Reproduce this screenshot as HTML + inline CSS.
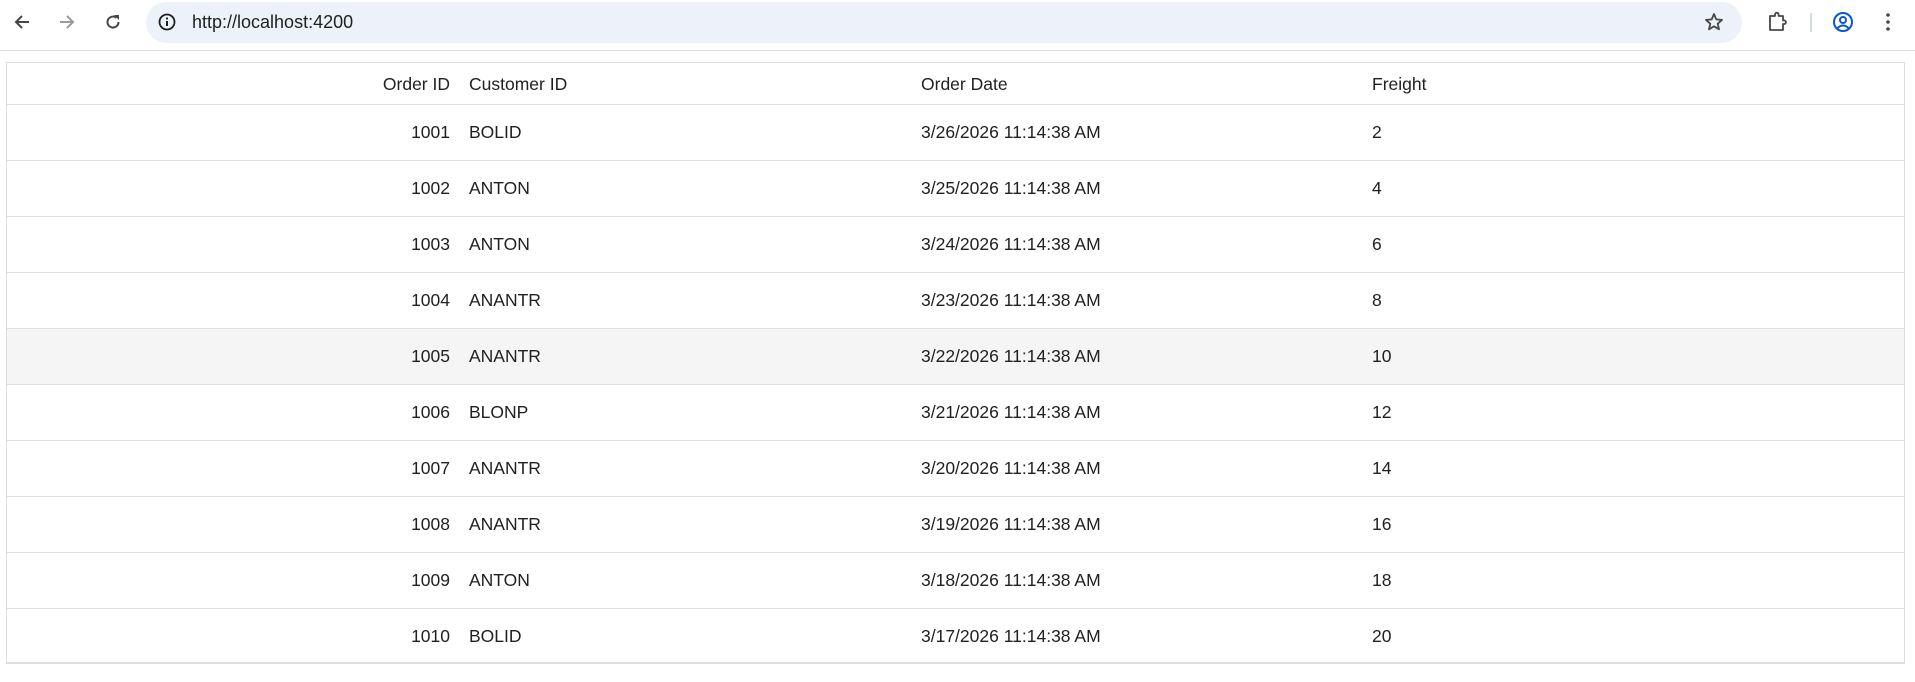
<!DOCTYPE html>
<html><head><meta charset="utf-8"><style>
*{margin:0;padding:0;box-sizing:border-box}
body{width:1915px;height:682px;background:#fff;font-family:"Liberation Sans",sans-serif;position:relative;overflow:hidden;color:#212121}
.bar{position:absolute;left:0;top:0;width:1915px;height:51px;border-bottom:1px solid #dadce0;background:#fff}
.addr{position:absolute;left:146px;top:2px;width:1596px;height:41px;border-radius:21px;background:#edf2fa}
.url{position:absolute;left:192px;top:12px;font-size:18px;color:#1f1f1f}
svg{position:absolute}
.grid{position:absolute;left:6px;top:62px;width:1899px;height:602px;border:1px solid #dedede;border-bottom:2px solid #dedede}
.row{position:absolute;left:0;width:100%;border-top:1px solid #e0e0e0;font-size:17.5px}
.row span{position:absolute}
.c1{right:1454px;text-align:right}
.c2{left:462px}
.c3{left:914px}
.c4{left:1365px}
</style></head><body>
<div class="bar">
<svg width="20" height="20" style="left:12px;top:12px" viewBox="0 0 20 20"><path d="M17 10H4M10 4L4 10L10 16" fill="none" stroke="#474747" stroke-width="2"/></svg>
<svg width="20" height="20" style="left:57px;top:12px" viewBox="0 0 20 20"><path d="M3 10H16M10 4L16 10L10 16" fill="none" stroke="#9a9a9a" stroke-width="2"/></svg>
<svg width="20" height="20" style="left:103px;top:12px" viewBox="0 0 20 20"><path d="M15.5 10A5.5 5.5 0 1 1 13.5 5.8" fill="none" stroke="#474747" stroke-width="2"/><path d="M11 3H16V8Z" fill="#474747"/></svg>
<div class="addr"></div>
<svg width="20" height="20" style="left:157px;top:12px" viewBox="0 0 20 20"><circle cx="10" cy="10" r="7.5" fill="none" stroke="#1f1f1f" stroke-width="1.8"/><path d="M10 9V14" stroke="#1f1f1f" stroke-width="2"/><circle cx="10" cy="6.5" r="1.1" fill="#1f1f1f"/></svg>
<div class="url">http://localhost:4200</div>
<svg width="22" height="22" style="left:1703px;top:11px" viewBox="0 0 22 22"><path d="M11 3L13.3 8.4L19 8.9L14.7 12.7L16 18.3L11 15.3L6 18.3L7.3 12.7L3 8.9L8.7 8.4Z" fill="none" stroke="#474747" stroke-width="1.8" stroke-linejoin="round"/></svg>
<svg width="22" height="22" style="left:1766px;top:11px" viewBox="0 0 22 22"><path d="M4 5H9V3.5A1.8 1.8 0 0 1 12.6 3.5V5H17V9.5H18.5A1.8 1.8 0 0 1 18.5 13H17V19H4Z" fill="none" stroke="#474747" stroke-width="1.8" stroke-linejoin="round"/></svg>
<div style="position:absolute;left:1810px;top:13px;width:2px;height:19px;background:#d3dbe9"></div>
<svg width="22" height="22" style="left:1832px;top:11px" viewBox="0 0 22 22"><circle cx="11" cy="11" r="9" fill="none" stroke="#0b57d0" stroke-width="2"/><circle cx="11" cy="9" r="3" fill="none" stroke="#0b57d0" stroke-width="2"/><path d="M5.5 17Q11 12 16.5 17" fill="none" stroke="#0b57d0" stroke-width="2"/></svg>
<svg width="10" height="22" style="left:1883px;top:11px" viewBox="0 0 10 22"><circle cx="5" cy="4" r="1.8" fill="#474747"/><circle cx="5" cy="11" r="1.8" fill="#474747"/><circle cx="5" cy="18" r="1.8" fill="#474747"/></svg>
</div>
<div class="grid">
<div class="row" style="top:0;height:41px;border-top:none"><span class="c1" style="top:11px">Order ID</span><span class="c2" style="top:11px">Customer ID</span><span class="c3" style="top:11px">Order Date</span><span class="c4" style="top:11px">Freight</span></div>
<div class="row" style="top:41px;height:56px"><span class="c1" style="top:17px">1001</span><span class="c2" style="top:17px">BOLID</span><span class="c3" style="top:17px">3/26/2026 11:14:38 AM</span><span class="c4" style="top:17px">2</span></div>
<div class="row" style="top:97px;height:56px"><span class="c1" style="top:17px">1002</span><span class="c2" style="top:17px">ANTON</span><span class="c3" style="top:17px">3/25/2026 11:14:38 AM</span><span class="c4" style="top:17px">4</span></div>
<div class="row" style="top:153px;height:56px"><span class="c1" style="top:17px">1003</span><span class="c2" style="top:17px">ANTON</span><span class="c3" style="top:17px">3/24/2026 11:14:38 AM</span><span class="c4" style="top:17px">6</span></div>
<div class="row" style="top:209px;height:56px"><span class="c1" style="top:17px">1004</span><span class="c2" style="top:17px">ANANTR</span><span class="c3" style="top:17px">3/23/2026 11:14:38 AM</span><span class="c4" style="top:17px">8</span></div>
<div class="row" style="top:265px;height:56px;background:#f5f5f5"><span class="c1" style="top:17px">1005</span><span class="c2" style="top:17px">ANANTR</span><span class="c3" style="top:17px">3/22/2026 11:14:38 AM</span><span class="c4" style="top:17px">10</span></div>
<div class="row" style="top:321px;height:56px"><span class="c1" style="top:17px">1006</span><span class="c2" style="top:17px">BLONP</span><span class="c3" style="top:17px">3/21/2026 11:14:38 AM</span><span class="c4" style="top:17px">12</span></div>
<div class="row" style="top:377px;height:56px"><span class="c1" style="top:17px">1007</span><span class="c2" style="top:17px">ANANTR</span><span class="c3" style="top:17px">3/20/2026 11:14:38 AM</span><span class="c4" style="top:17px">14</span></div>
<div class="row" style="top:433px;height:56px"><span class="c1" style="top:17px">1008</span><span class="c2" style="top:17px">ANANTR</span><span class="c3" style="top:17px">3/19/2026 11:14:38 AM</span><span class="c4" style="top:17px">16</span></div>
<div class="row" style="top:489px;height:56px"><span class="c1" style="top:17px">1009</span><span class="c2" style="top:17px">ANTON</span><span class="c3" style="top:17px">3/18/2026 11:14:38 AM</span><span class="c4" style="top:17px">18</span></div>
<div class="row" style="top:545px;height:55px"><span class="c1" style="top:17px">1010</span><span class="c2" style="top:17px">BOLID</span><span class="c3" style="top:17px">3/17/2026 11:14:38 AM</span><span class="c4" style="top:17px">20</span></div>
</div>
</body></html>
